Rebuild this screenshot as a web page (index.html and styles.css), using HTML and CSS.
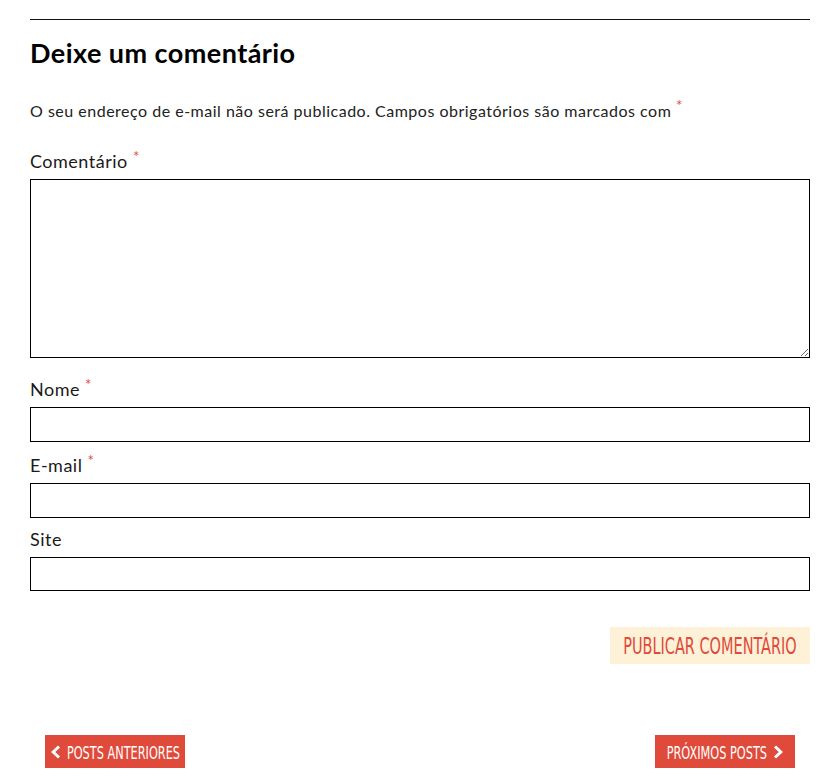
FILE: index.html
```html
<!DOCTYPE html>
<html lang="pt-BR">
<head>
<meta charset="utf-8">
<title>Deixe um comentário</title>
<link rel="stylesheet" href="styles.css">
</head>
<body>
<div class="page">
  <hr class="rule">
  <section class="respond">
    <h3 class="reply-title">Deixe um comentário</h3>
    <form class="comment-form">
      <p class="notes">O seu endereço de e-mail não será publicado. Campos obrigatórios são marcados com <span class="req">*</span></p>
      <div class="field field-comment">
        <label class="label" for="comment">Comentário <span class="req">*</span></label>
        <textarea id="comment" class="textarea"></textarea>
      </div>
      <div class="field field-author">
        <label class="label" for="author">Nome <span class="req">*</span></label>
        <input id="author" class="input" type="text">
      </div>
      <div class="field field-email">
        <label class="label" for="email">E-mail <span class="req">*</span></label>
        <input id="email" class="input" type="text">
      </div>
      <div class="field field-url">
        <label class="label" for="url">Site</label>
        <input id="url" class="input input-url" type="text">
      </div>
      <div class="submit-row">
        <button type="button" class="submit"><span class="submit-text">Publicar comentário</span></button>
      </div>
    </form>
  </section>
  <nav class="posts-nav">
    <a class="nav-btn nav-prev" href="#"><svg class="chev" width="10" height="14" viewBox="0 0 10 14"><polyline points="8,1.5 2.2,7 8,12.5" fill="none" stroke="#fff" stroke-width="3"/></svg><span class="nav-text nav-text-prev">Posts anteriores</span></a>
    <a class="nav-btn nav-next" href="#"><span class="nav-text nav-text-next">Próximos posts</span><svg class="chev" width="10" height="14" viewBox="0 0 10 14"><polyline points="2,1.5 7.8,7 2,12.5" fill="none" stroke="#fff" stroke-width="3"/></svg></a>
  </nav>
</div>
</body>
</html>
```
FILE: styles.css
```css
* { box-sizing: border-box; }
html, body { margin: 0; padding: 0; background: #fff; }
body {
  font-family: "Lato", "Open Sans", sans-serif;
  color: #111;
}
.page {
  padding: 19px 26px 0 30px;
}
.rule {
  margin: 0;
  border: 0;
  border-top: 1px solid #111;
}
.reply-title {
  margin: 17px 0 0;
  font-size: 27px;
  line-height: 32px;
  font-weight: 700;
  letter-spacing: 0.45px;
  color: #000;
}
.comment-form { margin: 0; }
.notes {
  margin: 30px 0 0;
  font-size: 16px;
  line-height: 24px;
  letter-spacing: 0.5px;
  color: #222;
}
.req {
  color: #e04a3a;
  font-size: 15px;
  line-height: 0;
  vertical-align: 6px;
}
.field {
  display: flex;
  flex-direction: column;
}
.field-comment { margin-top: 24px; }
.field-author { margin-top: 17px; }
.field-email { margin-top: 9px; }
.field-url { margin-top: 7px; }
.label {
  font-size: 18px;
  line-height: 28px;
  letter-spacing: 0.5px;
  color: #1a1a1a;
  margin-bottom: 4px;
}
.textarea {
  display: block;
  width: 100%;
  height: 179px;
  border: 1px solid #000;
  border-radius: 0;
  margin: 0;
  padding: 6px;
  font: inherit;
  resize: vertical;
}
.input {
  display: block;
  width: 100%;
  height: 35px;
  border: 1px solid #000;
  border-radius: 0;
  margin: 0;
  padding: 4px 8px;
  font: inherit;
}
.input-url { height: 34px; }
.submit-row {
  display: flex;
  justify-content: flex-end;
  margin-top: 36px;
}
.submit {
  display: flex;
  align-items: center;
  justify-content: center;
  border: 0;
  border-radius: 0;
  background: #fdf2d8;
  color: #e04a3a;
  font-family: "DejaVu Sans", sans-serif;
  font-stretch: condensed;
  font-size: 23px;
  height: 37px;
  width: 200px;
  padding: 0;
  text-transform: uppercase;
  white-space: nowrap;
  cursor: pointer;
}
.submit-text {
  display: inline-block;
  transform: scaleX(0.7);
  margin: 0 -37px;
}
.posts-nav {
  display: flex;
  justify-content: space-between;
  padding: 0 15px;
  margin-top: 71px;
}
.nav-btn {
  display: inline-flex;
  align-items: center;
  gap: 6px;
  height: 33px;
  width: 140px;
  padding-top: 2px;
  justify-content: center;
  background: #e04a3a;
  color: #fff;
  text-decoration: none;
  text-transform: uppercase;
  white-space: nowrap;
  font-family: "DejaVu Sans", sans-serif;
  font-stretch: condensed;
  font-size: 17px;
}
.nav-text {
  display: inline-block;
  transform: scaleX(0.74);
  margin: 0 -20px;
}
.nav-text-next { margin: 0 -18px; }
.chev { flex: none; margin-top: -2px; }
```
